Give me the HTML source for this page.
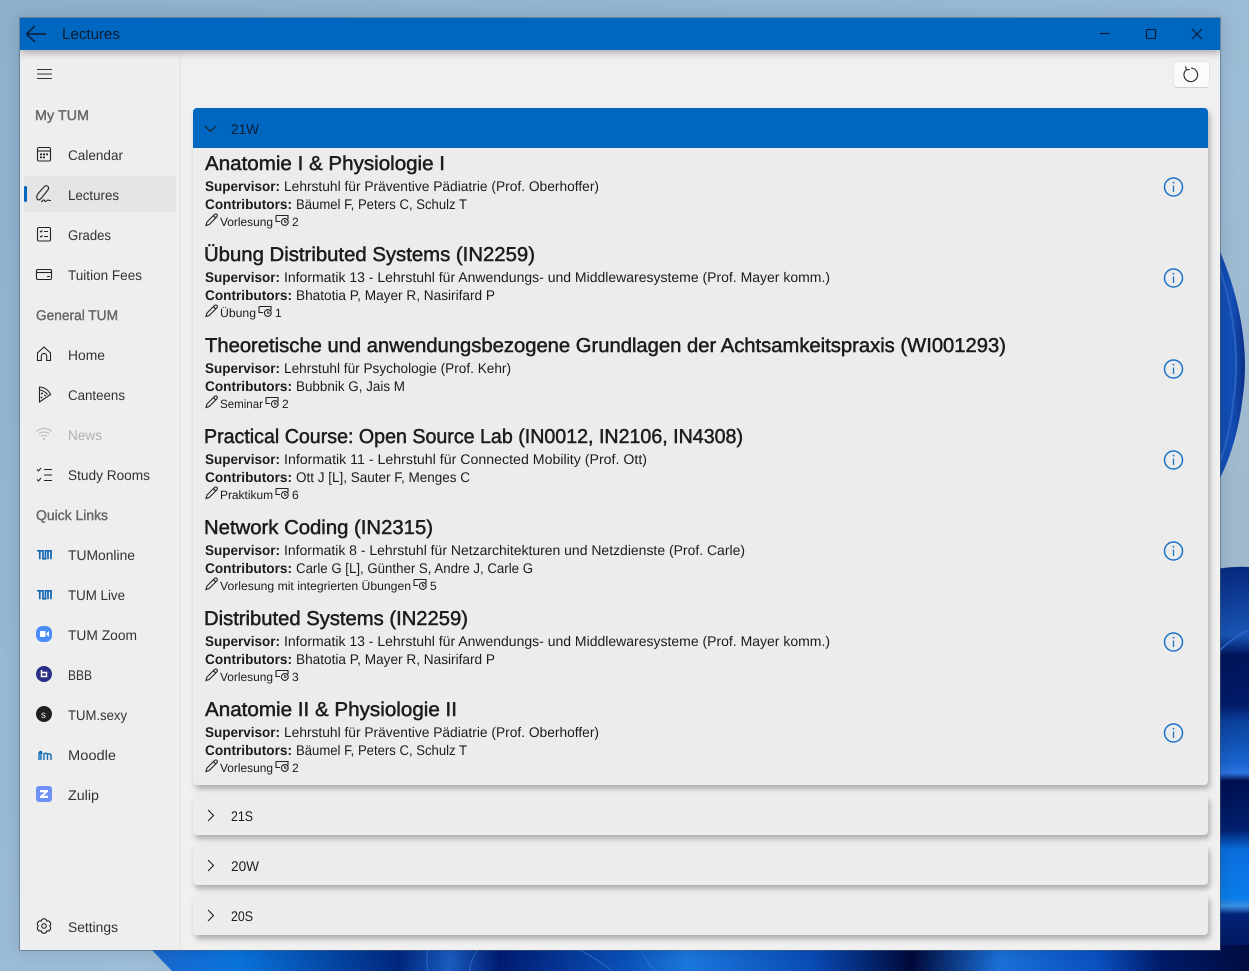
<!DOCTYPE html>
<html lang="en"><head><meta charset="utf-8"><title>Lectures</title>
<style>
html,body{margin:0;padding:0;width:1249px;height:971px;overflow:hidden;background:#9db9d2}
.abs{position:absolute}
.card{position:absolute;left:193px;width:1015px;background:#ececec;border-radius:4px;box-shadow:2px 4px 6px rgba(0,0,0,.28)}
svg{position:absolute;left:0;top:0}
text{font-family:"Liberation Sans",sans-serif;fill:#1c1c1c;font-size:14px;text-rendering:geometricPrecision}
.t{font-size:20px;stroke:#1c1c1c;stroke-width:.5px}
.b{font-weight:700}
.s{font-size:12px}
.h{fill:#666;stroke:#666;stroke-width:.4px}
.n{fill:#333}
.i{fill:none;stroke:#222;stroke-width:1.1}
</style></head><body>
<svg width="1249" height="971" viewBox="0 0 1249 971">
<defs>
<linearGradient id="bg" x1="0" y1="0" x2="1" y2="1"><stop offset="0" stop-color="#8db0cc"/><stop offset=".55" stop-color="#9dbcd5"/><stop offset="1" stop-color="#a4b6c7"/></linearGradient>
<linearGradient id="sw" x1="0" y1="0" x2="1" y2="0"><stop offset="0" stop-color="#0b3fa8"/><stop offset=".7" stop-color="#1450b8"/><stop offset="1" stop-color="#0a2f86"/></linearGradient>
<linearGradient id="rb" x1="0" y1="0" x2="0" y2="1"><stop offset="0" stop-color="#06297e"/><stop offset=".17" stop-color="#1a55b5"/><stop offset=".22" stop-color="#01145a"/><stop offset=".34" stop-color="#021a68"/><stop offset=".38" stop-color="#0a3f9a"/><stop offset=".49" stop-color="#1a66d0"/><stop offset=".51" stop-color="#2f74e0"/><stop offset=".53" stop-color="#000e50"/><stop offset=".65" stop-color="#01206e"/><stop offset=".70" stop-color="#0a6cdc"/><stop offset=".82" stop-color="#0b7ee8"/><stop offset=".84" stop-color="#3a8fe0"/><stop offset=".86" stop-color="#02247a"/><stop offset="1" stop-color="#010f4c"/></linearGradient>
<linearGradient id="bb" x1="0" y1="0" x2="1249" y2="0" gradientUnits="userSpaceOnUse"><stop offset=".118" stop-color="#1b66cc"/><stop offset=".19" stop-color="#0a74dc"/><stop offset=".32" stop-color="#01277e"/><stop offset=".36" stop-color="#1a5cc0"/><stop offset=".40" stop-color="#011c72"/><stop offset=".50" stop-color="#0a50b8"/><stop offset=".55" stop-color="#1c78dc"/><stop offset=".65" stop-color="#0a4cb8"/><stop offset=".73" stop-color="#010a3a"/><stop offset=".80" stop-color="#1a70d8"/><stop offset=".88" stop-color="#0a50c0"/><stop offset=".93" stop-color="#011a68"/><stop offset="1" stop-color="#000c40"/></linearGradient>
<g id="pen"><path class="i" stroke-width="1" d="M206 225.500l1-3.500 7.500-7.500c.8-.8 2-.8 2.500 0s.5 1.700-.3 2.500l-7.500 7.500zM213.500 215.700l2.500 2.500"/></g>
<g id="info"><circle cx="1173.500" cy="187" r="9" fill="none" stroke="#1a73c9" stroke-width="1.500"/><path d="M1173.500 185.500v6.500" stroke="#1a73c9" stroke-width="1.300"/><circle cx="1173.500" cy="182.700" r=".9" fill="#1a73c9"/></g>
<g id="clock"><path class="i" stroke-width=".9" d="M0 .5h12v4M0 .5v6h4" /><circle cx="8.800" cy="7" r="3.400" class="i" stroke-width=".9"/><path class="i" stroke-width=".8" d="M8.800 5v2.200h1.800"/></g>
<g id="right"><path class="i" stroke-width="1.100" d="M0 0l5.500 5.500L0 11" fill="none"/></g>
<g id="tum"><path fill="none" stroke="#1366b3" stroke-width="1.700" d="M0 .8h6v8h2.500v-8h5.500v8.500M2.800 .8v8.500M11 .8v8.500"/></g>
</defs>

<!-- wallpaper -->
<rect width="1249" height="971" fill="url(#bg)"/>
<path d="M1215 240C1238 290 1250 345 1243 395C1238 440 1224 480 1200 510Z" fill="url(#sw)"/>
<path d="M1215 255C1232 300 1240 350 1234 395C1230 435 1222 465 1205 495" fill="none" stroke="#2a62c4" stroke-width="2"/>
<path d="M1200 572C1220 568 1235 566 1249 567V971H1200Z" fill="url(#rb)"/>
<path d="M1220 650Q1235 636 1249 630" stroke="#2a62c4" stroke-width="2" fill="none"/>
<path d="M147 945H1249V971H172Z" fill="url(#bb)"/>
<path d="M428 950C426 958 427 965 428 971M478 950C472 958 470 965 470 971M580 950C595 958 605 965 612 971M640 950C645 958 650 965 655 971" stroke="#3f86d8" stroke-width="1" stroke-opacity=".6" fill="none"/>
</svg>

<!-- window -->
<div class="abs" style="left:19px;top:17px;width:1202px;height:934px;background:rgba(70,90,110,.55);box-shadow:0 0 14px rgba(0,20,50,.14)"></div>
<div class="abs" style="left:20px;top:18px;width:1200px;height:932px;background:#eeeeee;overflow:hidden">
  <div class="abs" style="left:160px;top:32px;width:1040px;height:900px;background:#f0f0f0;border-left:1px solid #e2e2e2;border-top-left-radius:8px"></div>
  <div class="abs" style="left:0;top:0;width:1200px;height:32px;background:#0067c0;box-shadow:0 3px 7px rgba(0,0,0,.28)"></div>
</div>
<div class="abs" style="left:24px;top:176px;width:152px;height:36px;background:#e5e5e5;border-radius:4px"></div>
<div class="abs" style="left:24px;top:186px;width:3px;height:16px;background:#0067c0;border-radius:2px"></div>
<div class="abs" style="left:1173px;top:61px;width:35px;height:25px;background:#fbfbfb;border:1px solid #e4e4e4;border-bottom-color:#d0d0d0;border-radius:4px"></div>

<!-- cards -->
<div class="card" style="top:108px;height:677px"></div>
<div class="abs" style="left:193px;top:108px;width:1015px;height:40px;background:#0067c0;border-radius:4px 4px 0 0"></div>
<div class="card" style="top:795px;height:40px"></div>
<div class="card" style="top:845px;height:40px"></div>
<div class="card" style="top:895px;height:40px"></div>

<svg width="1249" height="971" viewBox="0 0 1249 971">
<!-- title bar -->
<path d="M26.500 34H46M26.500 34l8.500-8M26.500 34l8.500 8" fill="none" stroke="#0a1a2e" stroke-width="1.400"/>
<text x="62" y="39" font-size="15" style="font-size:15px;fill:#0c1d30" textLength="58" lengthAdjust="spacingAndGlyphs">Lectures</text>
<path d="M1100 33.500h10" stroke="#06182c" stroke-width="1.100"/>
<rect x="1146.500" y="29.500" width="9" height="9" rx="1" fill="none" stroke="#06182c" stroke-width="1.100"/>
<path d="M1192 29l10 10M1202 29l-10 10" stroke="#06182c" stroke-width="1.100"/>

<!-- refresh -->
<path d="M1186.500 69.500A6.800 6.800 0 1 0 1191 68" fill="none" stroke="#222" stroke-width="1.100"/>
<path d="M1185.500 66.500l1 3.400 3.400-.4" fill="none" stroke="#222" stroke-width="1.100"/>

<!-- sidebar -->
<path d="M37 69.500h15M37 74h15M37 78.500h15" stroke="#333" stroke-width="1"/>
<text class="h" x="35" y="120" textLength="54" lengthAdjust="spacingAndGlyphs">My TUM</text>
<text class="h" x="36" y="320" textLength="82" lengthAdjust="spacingAndGlyphs">General TUM</text>
<text class="h" x="36" y="520" textLength="72" lengthAdjust="spacingAndGlyphs">Quick Links</text>

<text class="n" x="68" y="160" textLength="55" lengthAdjust="spacingAndGlyphs">Calendar</text>
<text class="n" x="68" y="200" textLength="51" lengthAdjust="spacingAndGlyphs">Lectures</text>
<text class="n" x="68" y="240" textLength="43" lengthAdjust="spacingAndGlyphs">Grades</text>
<text class="n" x="68" y="280" textLength="74" lengthAdjust="spacingAndGlyphs">Tuition Fees</text>
<text class="n" x="68" y="360" textLength="37" lengthAdjust="spacingAndGlyphs">Home</text>
<text class="n" x="68" y="400" textLength="57" lengthAdjust="spacingAndGlyphs">Canteens</text>
<text x="68" y="440" style="fill:#b0b0b0" textLength="34" lengthAdjust="spacingAndGlyphs">News</text>
<text class="n" x="68" y="480" textLength="82" lengthAdjust="spacingAndGlyphs">Study Rooms</text>
<text class="n" x="68" y="560" textLength="67" lengthAdjust="spacingAndGlyphs">TUMonline</text>
<text class="n" x="68" y="600" textLength="57" lengthAdjust="spacingAndGlyphs">TUM Live</text>
<text class="n" x="68" y="640" textLength="69" lengthAdjust="spacingAndGlyphs">TUM Zoom</text>
<text class="n" x="68" y="680" textLength="24" lengthAdjust="spacingAndGlyphs">BBB</text>
<text class="n" x="68" y="720" textLength="59" lengthAdjust="spacingAndGlyphs">TUM.sexy</text>
<text class="n" x="68" y="760" textLength="48" lengthAdjust="spacingAndGlyphs">Moodle</text>
<text class="n" x="68" y="800" textLength="31" lengthAdjust="spacingAndGlyphs">Zulip</text>
<text class="n" x="68" y="932" textLength="50" lengthAdjust="spacingAndGlyphs">Settings</text>

<!-- nav icons -->
<rect x="37.500" y="147.500" width="13" height="13.500" rx="1.500" class="i"/><path d="M37.500 151h13" class="i"/><path d="M40 153.500h2v1.700h-2zM43 153.500h2v1.700h-2zM46 153.500h2v1.700h-2zM40 156.500h2v1.700h-2zM43 156.500h2v1.700h-2z" fill="#222"/>
<path class="i" d="M37.500 199.500c-1.500-2-.5-4.500 1-6.500l6-6.500c1.500-1.500 3.500-.5 4 .8.400 1.200 0 2-1 3.200l-6 7.500c-1.500 1.500-3 2.500-4 1.500zM41 201.500c1.500.3 2-2 3-1.500s.5 1.500 1.500 1.500 1.500-1.500 2.500-1.500 1 .6 3 .5"/>
<rect x="37.500" y="227.500" width="13" height="13.500" rx="1.500" class="i"/><path class="i" d="M40 231l1 1 1.500-1.500M44 231.500h4M40 236l1 1 1.500-1.500M44 236.500h4" stroke-width=".9"/>
<rect x="36.500" y="269.500" width="15" height="10" rx="1.500" class="i"/><path class="i" d="M36.500 272.500h15"/><path d="M47 276.500h3" stroke="#222"/>
<path class="i" d="M37.500 360.500v-7.500l6.500-6 6.500 6v7.500h-3.800v-4.500c0-3.400-5.400-3.400-5.400 0v4.500z"/>
<path class="i" d="M39.500 402v-15c5 .5 9 3 11 7.500zM39.500 390c3.500.3 6 2 8 4.500"/><circle cx="42" cy="393.500" r="1" fill="#222"/><circle cx="45" cy="395.500" r=".9" fill="#222"/><circle cx="41.500" cy="397.500" r=".9" fill="#222"/>
<path d="M36.500 431.500c4.500-4 11-4 15 0M38.800 434c3-2.700 7.500-2.700 10.500 0M41 436.500c1.800-1.500 4.200-1.500 6 0" fill="none" stroke="#b5b5b5" stroke-width="1"/><circle cx="44" cy="439" r="1" fill="#b5b5b5"/>
<path d="M37 469.500l1.500 1.500 2.500-3M37 479.500l1.500 1.500 2.500-3M44 469.500h8M44 475h8M44 480.500h8" fill="none" stroke="#222" stroke-width="1"/>
<use href="#tum" x="37" y="550"/>
<use href="#tum" x="37" y="590"/>
<rect x="36" y="626" width="16" height="16" rx="6.500" fill="#4a8dfb"/><rect x="40" y="631" width="5.500" height="6" rx="1" fill="#fff"/><path d="M46.500 633l2.500-1.700v5.400l-2.500-1.700z" fill="#fff"/>
<circle cx="44" cy="674" r="8" fill="#2b2f85"/><path d="M41.500 670v6.500h5v-4h-5" fill="none" stroke="#fff" stroke-width="1.500"/>
<circle cx="44" cy="714" r="8" fill="#1f1f1f"/><text x="41" y="718" style="font-size:10px;fill:#e8e8e8">s</text>
<path d="M39 760v-6.500c0-1.500 1-2 3-2M41 760v-7M38.500 753h4M44 760v-7M44 754c1.500-1.200 3.300-1 3.500 1v5M47.500 754.500c1.200-1.300 3.300-1 3.500 1v4.500" fill="none" stroke="#0f6cb5" stroke-width="1.400"/>
<rect x="36" y="786" width="16" height="16" rx="3" fill="#6f91f7"/><path d="M40 790h8v1.800l-4.500 4h4.500v2.200h-8v-1.800l4.500-4H40z" fill="#fff"/>
<path class="i" transform="rotate(30 44 926)" d="M48.850 923.200A2.850 2.850 0 0 1 48.850 928.800A2.850 2.850 0 0 1 44 931.600A2.850 2.850 0 0 1 39.150 928.800A2.850 2.850 0 0 1 39.150 923.200A2.850 2.850 0 0 1 44 920.400A2.850 2.850 0 0 1 48.850 923.200z"/><circle cx="44" cy="926" r="2.300" class="i"/>

<!-- card headers -->
<path d="M205 126l5.500 5.500 5.500-5.500" class="i" fill="none" stroke="#0a1a2e"/>
<text x="231" y="134" textLength="28" lengthAdjust="spacingAndGlyphs" style="fill:#0c1d30">21W</text>
<use href="#right" x="208" y="810"/><text x="231" y="821" textLength="22" lengthAdjust="spacingAndGlyphs">21S</text>
<use href="#right" x="208" y="860"/><text x="231" y="871" textLength="28" lengthAdjust="spacingAndGlyphs">20W</text>
<use href="#right" x="208" y="910"/><text x="231" y="921" textLength="22" lengthAdjust="spacingAndGlyphs">20S</text>

<!-- row 1 -->
<g>
<text class="t" x="205" y="170" textLength="240" lengthAdjust="spacingAndGlyphs">Anatomie I &amp; Physiologie I</text>
<text class="b" x="205" y="191" textLength="75" lengthAdjust="spacingAndGlyphs">Supervisor:</text>
<text x="284" y="191" textLength="315" lengthAdjust="spacingAndGlyphs">Lehrstuhl für Präventive Pädiatrie (Prof. Oberhoffer)</text>
<text class="b" x="205" y="209" textLength="87" lengthAdjust="spacingAndGlyphs">Contributors:</text>
<text x="296" y="209" textLength="171" lengthAdjust="spacingAndGlyphs">Bäumel F, Peters C, Schulz T</text>
<use href="#pen"/>
<text class="s" x="220" y="226" textLength="53" lengthAdjust="spacingAndGlyphs">Vorlesung</text>
<use href="#clock" x="276" y="215"/>
<text class="s" x="292" y="226">2</text>
<use href="#info"/>
</g>
<!-- row 2 -->
<g transform="translate(0 91)">
<text class="t" x="204" y="170" textLength="331" lengthAdjust="spacingAndGlyphs">Übung Distributed Systems (IN2259)</text>
<text class="b" x="205" y="191" textLength="75" lengthAdjust="spacingAndGlyphs">Supervisor:</text>
<text x="284" y="191" textLength="546" lengthAdjust="spacingAndGlyphs">Informatik 13 - Lehrstuhl für Anwendungs- und Middlewaresysteme (Prof. Mayer komm.)</text>
<text class="b" x="205" y="209" textLength="87" lengthAdjust="spacingAndGlyphs">Contributors:</text>
<text x="296" y="209" textLength="199" lengthAdjust="spacingAndGlyphs">Bhatotia P, Mayer R, Nasirifard P</text>
<use href="#pen"/>
<text class="s" x="220" y="226" textLength="36" lengthAdjust="spacingAndGlyphs">Übung</text>
<use href="#clock" x="259" y="215"/>
<text class="s" x="275" y="226">1</text>
<use href="#info"/>
</g>
<!-- row 3 -->
<g transform="translate(0 182)">
<text class="t" x="205" y="170" textLength="801" lengthAdjust="spacingAndGlyphs">Theoretische und anwendungsbezogene Grundlagen der Achtsamkeitspraxis (WI001293)</text>
<text class="b" x="205" y="191" textLength="75" lengthAdjust="spacingAndGlyphs">Supervisor:</text>
<text x="284" y="191" textLength="227" lengthAdjust="spacingAndGlyphs">Lehrstuhl für Psychologie (Prof. Kehr)</text>
<text class="b" x="205" y="209" textLength="87" lengthAdjust="spacingAndGlyphs">Contributors:</text>
<text x="296" y="209" textLength="109" lengthAdjust="spacingAndGlyphs">Bubbnik G, Jais M</text>
<use href="#pen"/>
<text class="s" x="220" y="226" textLength="43" lengthAdjust="spacingAndGlyphs">Seminar</text>
<use href="#clock" x="266" y="215"/>
<text class="s" x="282" y="226">2</text>
<use href="#info"/>
</g>
<!-- row 4 -->
<g transform="translate(0 273)">
<text class="t" x="204" y="170" textLength="539" lengthAdjust="spacingAndGlyphs">Practical Course: Open Source Lab (IN0012, IN2106, IN4308)</text>
<text class="b" x="205" y="191" textLength="75" lengthAdjust="spacingAndGlyphs">Supervisor:</text>
<text x="284" y="191" textLength="363" lengthAdjust="spacingAndGlyphs">Informatik 11 - Lehrstuhl für Connected Mobility (Prof. Ott)</text>
<text class="b" x="205" y="209" textLength="87" lengthAdjust="spacingAndGlyphs">Contributors:</text>
<text x="296" y="209" textLength="174" lengthAdjust="spacingAndGlyphs">Ott J [L], Sauter F, Menges C</text>
<use href="#pen"/>
<text class="s" x="220" y="226" textLength="53" lengthAdjust="spacingAndGlyphs">Praktikum</text>
<use href="#clock" x="276" y="215"/>
<text class="s" x="292" y="226">6</text>
<use href="#info"/>
</g>
<!-- row 5 -->
<g transform="translate(0 364)">
<text class="t" x="204" y="170" textLength="229" lengthAdjust="spacingAndGlyphs">Network Coding (IN2315)</text>
<text class="b" x="205" y="191" textLength="75" lengthAdjust="spacingAndGlyphs">Supervisor:</text>
<text x="284" y="191" textLength="461" lengthAdjust="spacingAndGlyphs">Informatik 8 - Lehrstuhl für Netzarchitekturen und Netzdienste (Prof. Carle)</text>
<text class="b" x="205" y="209" textLength="87" lengthAdjust="spacingAndGlyphs">Contributors:</text>
<text x="296" y="209" textLength="237" lengthAdjust="spacingAndGlyphs">Carle G [L], Günther S, Andre J, Carle G</text>
<use href="#pen"/>
<text class="s" x="220" y="226" textLength="191" lengthAdjust="spacingAndGlyphs">Vorlesung mit integrierten Übungen</text>
<use href="#clock" x="414" y="215"/>
<text class="s" x="430" y="226">5</text>
<use href="#info"/>
</g>
<!-- row 6 -->
<g transform="translate(0 455)">
<text class="t" x="204" y="170" textLength="264" lengthAdjust="spacingAndGlyphs">Distributed Systems (IN2259)</text>
<text class="b" x="205" y="191" textLength="75" lengthAdjust="spacingAndGlyphs">Supervisor:</text>
<text x="284" y="191" textLength="546" lengthAdjust="spacingAndGlyphs">Informatik 13 - Lehrstuhl für Anwendungs- und Middlewaresysteme (Prof. Mayer komm.)</text>
<text class="b" x="205" y="209" textLength="87" lengthAdjust="spacingAndGlyphs">Contributors:</text>
<text x="296" y="209" textLength="199" lengthAdjust="spacingAndGlyphs">Bhatotia P, Mayer R, Nasirifard P</text>
<use href="#pen"/>
<text class="s" x="220" y="226" textLength="53" lengthAdjust="spacingAndGlyphs">Vorlesung</text>
<use href="#clock" x="276" y="215"/>
<text class="s" x="292" y="226">3</text>
<use href="#info"/>
</g>
<!-- row 7 -->
<g transform="translate(0 546)">
<text class="t" x="205" y="170" textLength="252" lengthAdjust="spacingAndGlyphs">Anatomie II &amp; Physiologie II</text>
<text class="b" x="205" y="191" textLength="75" lengthAdjust="spacingAndGlyphs">Supervisor:</text>
<text x="284" y="191" textLength="315" lengthAdjust="spacingAndGlyphs">Lehrstuhl für Präventive Pädiatrie (Prof. Oberhoffer)</text>
<text class="b" x="205" y="209" textLength="87" lengthAdjust="spacingAndGlyphs">Contributors:</text>
<text x="296" y="209" textLength="171" lengthAdjust="spacingAndGlyphs">Bäumel F, Peters C, Schulz T</text>
<use href="#pen"/>
<text class="s" x="220" y="226" textLength="53" lengthAdjust="spacingAndGlyphs">Vorlesung</text>
<use href="#clock" x="276" y="215"/>
<text class="s" x="292" y="226">2</text>
<use href="#info"/>
</g>
</svg>
</body></html>
